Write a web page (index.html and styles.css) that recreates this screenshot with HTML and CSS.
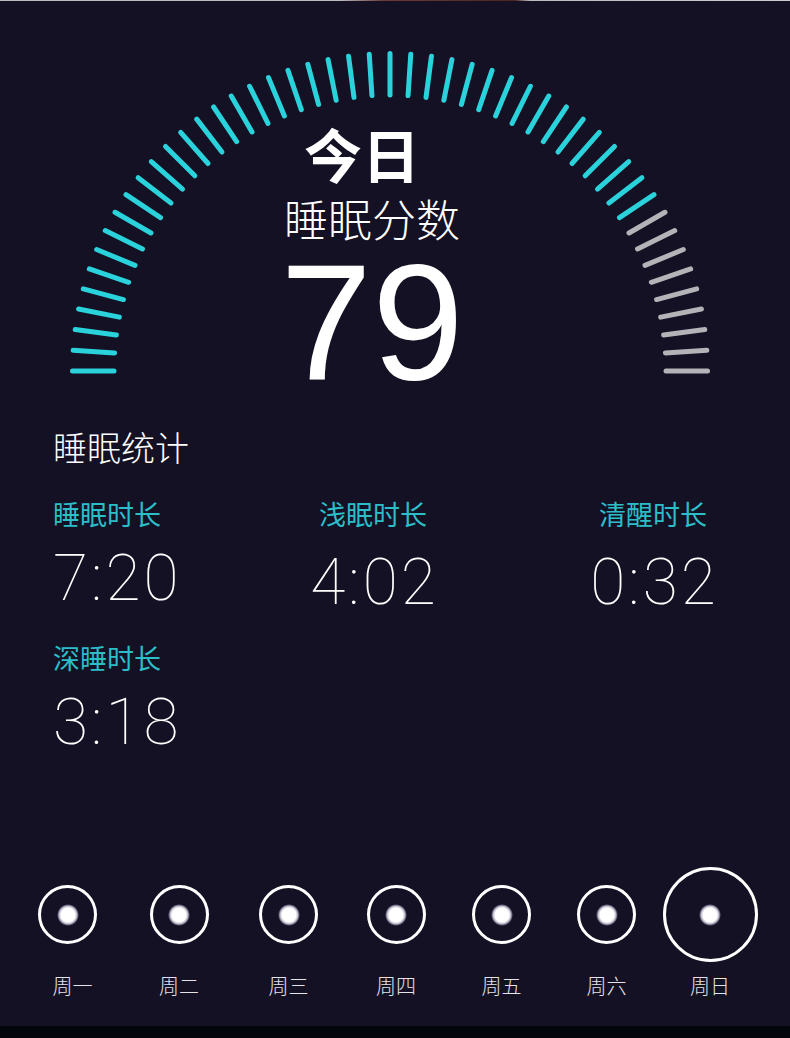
FILE: index.html
```html
<!DOCTYPE html>
<html lang="zh-CN">
<head>
<meta charset="utf-8">
<title>睡眠分数</title>
<link rel="stylesheet" href="styles.css">
</head>
<body>
<div class="topline"></div>
<section class="gauge">
  <svg class="gauge-ticks" viewBox="0 1 790 399" xmlns="http://www.w3.org/2000/svg" xmlns:xlink="http://www.w3.org/1999/xlink">
    <defs>
      <line id="t" x1="72.5" y1="371" x2="114" y2="371"/>
    </defs>
    <g class="ticks-on">
      <use href="#t" xlink:href="#t" transform="rotate(0 390 371)"/>
      <use href="#t" xlink:href="#t" transform="rotate(3.75 390 371)"/>
      <use href="#t" xlink:href="#t" transform="rotate(7.5 390 371)"/>
      <use href="#t" xlink:href="#t" transform="rotate(11.25 390 371)"/>
      <use href="#t" xlink:href="#t" transform="rotate(15 390 371)"/>
      <use href="#t" xlink:href="#t" transform="rotate(18.75 390 371)"/>
      <use href="#t" xlink:href="#t" transform="rotate(22.5 390 371)"/>
      <use href="#t" xlink:href="#t" transform="rotate(26.25 390 371)"/>
      <use href="#t" xlink:href="#t" transform="rotate(30 390 371)"/>
      <use href="#t" xlink:href="#t" transform="rotate(33.75 390 371)"/>
      <use href="#t" xlink:href="#t" transform="rotate(37.5 390 371)"/>
      <use href="#t" xlink:href="#t" transform="rotate(41.25 390 371)"/>
      <use href="#t" xlink:href="#t" transform="rotate(45 390 371)"/>
      <use href="#t" xlink:href="#t" transform="rotate(48.75 390 371)"/>
      <use href="#t" xlink:href="#t" transform="rotate(52.5 390 371)"/>
      <use href="#t" xlink:href="#t" transform="rotate(56.25 390 371)"/>
      <use href="#t" xlink:href="#t" transform="rotate(60 390 371)"/>
      <use href="#t" xlink:href="#t" transform="rotate(63.75 390 371)"/>
      <use href="#t" xlink:href="#t" transform="rotate(67.5 390 371)"/>
      <use href="#t" xlink:href="#t" transform="rotate(71.25 390 371)"/>
      <use href="#t" xlink:href="#t" transform="rotate(75 390 371)"/>
      <use href="#t" xlink:href="#t" transform="rotate(78.75 390 371)"/>
      <use href="#t" xlink:href="#t" transform="rotate(82.5 390 371)"/>
      <use href="#t" xlink:href="#t" transform="rotate(86.25 390 371)"/>
      <use href="#t" xlink:href="#t" transform="rotate(90 390 371)"/>
      <use href="#t" xlink:href="#t" transform="rotate(93.75 390 371)"/>
      <use href="#t" xlink:href="#t" transform="rotate(97.5 390 371)"/>
      <use href="#t" xlink:href="#t" transform="rotate(101.25 390 371)"/>
      <use href="#t" xlink:href="#t" transform="rotate(105 390 371)"/>
      <use href="#t" xlink:href="#t" transform="rotate(108.75 390 371)"/>
      <use href="#t" xlink:href="#t" transform="rotate(112.5 390 371)"/>
      <use href="#t" xlink:href="#t" transform="rotate(116.25 390 371)"/>
      <use href="#t" xlink:href="#t" transform="rotate(120 390 371)"/>
      <use href="#t" xlink:href="#t" transform="rotate(123.75 390 371)"/>
      <use href="#t" xlink:href="#t" transform="rotate(127.5 390 371)"/>
      <use href="#t" xlink:href="#t" transform="rotate(131.25 390 371)"/>
      <use href="#t" xlink:href="#t" transform="rotate(135 390 371)"/>
      <use href="#t" xlink:href="#t" transform="rotate(138.75 390 371)"/>
      <use href="#t" xlink:href="#t" transform="rotate(142.5 390 371)"/>
      <use href="#t" xlink:href="#t" transform="rotate(146.25 390 371)"/>
    </g>
    <g class="ticks-off">
      <use href="#t" xlink:href="#t" transform="rotate(150 390 371)"/>
      <use href="#t" xlink:href="#t" transform="rotate(153.75 390 371)"/>
      <use href="#t" xlink:href="#t" transform="rotate(157.5 390 371)"/>
      <use href="#t" xlink:href="#t" transform="rotate(161.25 390 371)"/>
      <use href="#t" xlink:href="#t" transform="rotate(165 390 371)"/>
      <use href="#t" xlink:href="#t" transform="rotate(168.75 390 371)"/>
      <use href="#t" xlink:href="#t" transform="rotate(172.5 390 371)"/>
      <use href="#t" xlink:href="#t" transform="rotate(176.25 390 371)"/>
      <use href="#t" xlink:href="#t" transform="rotate(180 390 371)"/>
    </g>
  </svg>
  <div class="gauge-text">
    <div class="today">今日</div>
    <div class="score-label">睡眠分数</div>
    <div class="score">79</div>
  </div>
</section>

<section class="stats">
  <h2 class="stats-title">睡眠统计</h2>
  <div class="stats-grid">
    <div class="stat">
      <div class="stat-label">睡眠时长</div>
      <div class="stat-value">7:20</div>
    </div>
    <div class="stat stat--center">
      <div class="stat-label">浅眠时长</div>
      <div class="stat-value">4:02</div>
    </div>
    <div class="stat stat--center">
      <div class="stat-label">清醒时长</div>
      <div class="stat-value">0:32</div>
    </div>
    <div class="stat">
      <div class="stat-label">深睡时长</div>
      <div class="stat-value">3:18</div>
    </div>
  </div>
</section>

<nav class="week">
  <div class="day day--first"><div class="day-ring"><div class="ring"><span class="dot"></span></div></div><div class="day-label">周一</div></div>
  <div class="day"><div class="day-ring"><div class="ring"><span class="dot"></span></div></div><div class="day-label">周二</div></div>
  <div class="day"><div class="day-ring"><div class="ring"><span class="dot"></span></div></div><div class="day-label">周三</div></div>
  <div class="day"><div class="day-ring"><div class="ring"><span class="dot"></span></div></div><div class="day-label">周四</div></div>
  <div class="day"><div class="day-ring"><div class="ring"><span class="dot"></span></div></div><div class="day-label">周五</div></div>
  <div class="day"><div class="day-ring"><div class="ring"><span class="dot"></span></div></div><div class="day-label">周六</div></div>
  <div class="day"><div class="day-ring"><div class="ring ring--big"><span class="dot"></span></div></div><div class="day-label">周日</div></div>
</nav>

<div class="bottombar"></div>
</body>
</html>
```

FILE: styles.css
```css
html, body {
  margin: 0;
  padding: 0;
}

body {
  width: 790px;
  height: 1038px;
  overflow: hidden;
  background: #141124;
  color: #ffffff;
  font-family: "Noto Sans CJK SC", "Noto Sans", sans-serif;
  display: flex;
  flex-direction: column;
}

.topline {
  height: 1px;
  flex: none;
  background: linear-gradient(90deg, #bcbbc1 0, #bcbbc1 340px, #6a3b37 383px, #4c2421 515px, #bcbbc1 530px, #cdcdd1 100%);
}

/* Gauge */
.gauge {
  display: grid;
  height: 399px;
  flex: none;
}

.gauge > * {
  grid-area: 1 / 1;
}

.gauge-ticks {
  display: block;
  width: 790px;
  height: 399px;
}

.ticks-on use,
.ticks-off use {
  stroke-width: 5;
  stroke-linecap: round;
}

.ticks-on {
  stroke: #2ad3dc;
}

.ticks-off {
  stroke: #b4b3b7;
}

.gauge-text {
  width: 744px;
  justify-self: start;
  display: flex;
  flex-direction: column;
  align-items: center;
  padding-top: 123px;
}

.today {
  font-size: 58px;
  font-weight: 700;
  line-height: 1;
  padding-right: 20px;
}

.score-label {
  font-size: 44px;
  font-weight: 300;
  line-height: 1;
  margin-top: 14px;
}

.score {
  font-family: "Liberation Sans", Arial, sans-serif;
  font-size: 165px;
  line-height: 1;
}

/* Stats */
.stats {
  flex: none;
  padding-left: 53px;
  margin-top: 30px;
}

.stats-title {
  margin: 0;
  font-size: 34px;
  font-weight: 300;
  line-height: 1;
}

.stats-grid {
  display: grid;
  grid-template-columns: 180px 280px 280px;
  row-gap: 29px;
  margin-top: 36px;
}

.stat {
  display: flex;
  flex-direction: column;
  align-items: flex-start;
}

.stat--center {
  align-items: center;
}

.stat-label {
  font-size: 27px;
  line-height: 1;
  color: #2cbec8;
}

.stat-value {
  font-family: Roboto, "Liberation Sans", sans-serif;
  font-weight: 100;
  font-size: 64px;
  line-height: 1;
  letter-spacing: 3px;
  margin-top: 20px;
}

.stat--center .stat-value {
  padding-top: 4px;
  padding-left: 3px;
}

/* Week */
.week {
  display: grid;
  grid-template-columns: 113px 110px 109px 106px 105px 105px 102px;
  padding-left: 11px;
  margin-top: auto;
  margin-bottom: 30px;
  flex: none;
}

.day {
  display: flex;
  flex-direction: column;
  align-items: center;
}

.day-ring {
  height: 95px;
  display: flex;
  align-items: center;
  justify-content: center;
}

.ring {
  width: 53px;
  height: 53px;
  border: 3px solid #ffffff;
  border-radius: 50%;
  display: flex;
  align-items: center;
  justify-content: center;
}

.ring--big {
  width: 89px;
  height: 89px;
}

.dot {
  width: 22px;
  height: 22px;
  border-radius: 50%;
  background: radial-gradient(circle, #ffffff 0, #ffffff 7px, rgba(235, 235, 250, 0.75) 9px, rgba(160, 160, 200, 0.25) 10.5px, rgba(160, 160, 200, 0) 11px);
}

.day-label {
  margin-top: 14px;
  font-size: 20px;
  font-weight: 300;
  line-height: 1;
  color: #e4e4ea;
}

.day--first .day-label {
  padding-left: 10px;
}

.bottombar {
  height: 12px;
  flex: none;
  background: #03060d;
}
```
